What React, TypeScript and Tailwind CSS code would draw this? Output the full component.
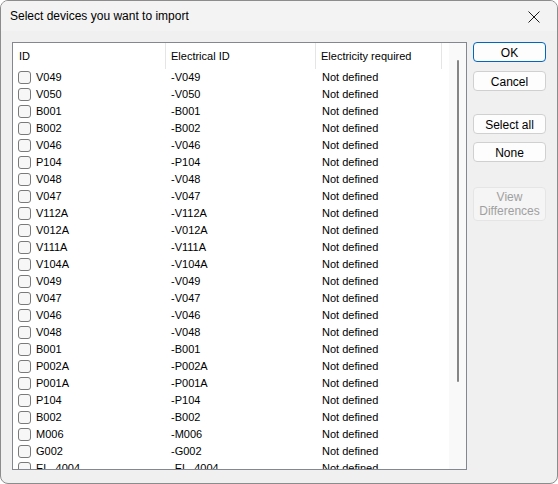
import React from "react";

const ROWS = [
  "V049", "V050", "B001", "B002", "V046", "P104", "V048", "V047",
  "V112A", "V012A", "V111A", "V104A", "V049", "V047", "V046", "V048",
  "B001", "P002A", "P001A", "P104", "B002", "M006", "G002", "EL_4004",
];

const ui = { fontFamily: '"Liberation Sans", Arial, sans-serif' };

function Btn({ children, primary, disabled, tall }: { children: React.ReactNode; primary?: boolean; disabled?: boolean; tall?: boolean }) {
  const cls = disabled
    ? "border-[#e5e5e5] bg-[#f5f5f5] text-[#a0a0a0]"
    : primary
      ? "border-[#0067c0] bg-[#fdfdfd] text-black"
      : "border-[#d0d0d0] bg-[#fdfdfd] text-black";
  return (
    <button
      className={`w-[73px] ${tall ? "h-[34px] leading-[14px]" : "h-[20px] pt-[1px]"} rounded-[4px] border text-[12px] ${cls}`}
      style={ui}
    >
      {children}
    </button>
  );
}

export default function App() {
  return (
    <div
      className="w-[558px] h-[484px] bg-[#f0f0f0] border border-[#8c8c8c] rounded-[8px] overflow-hidden flex flex-col"
      style={ui}
    >
      {/* title bar */}
      <div className="h-[30px] shrink-0 flex items-center justify-between pl-[9px] pr-[17px] bg-[#f3f3f3]">
        <span className="text-[12px] text-black">Select devices you want to import</span>
        <svg width="12" height="12" viewBox="0 0 12 12" className="mt-[1px]">
          <path d="M0.5 0.5 L11.5 11.5 M11.5 0.5 L0.5 11.5" stroke="#1a1a1a" strokeWidth="1" />
        </svg>
      </div>

      <div className="flex pt-[11px] pl-[11px] gap-[6px]">
        {/* list */}
        <div className="w-[455px] h-[428px] border border-[#828790] bg-white flex overflow-hidden">
          <div className="flex-1 flex flex-col overflow-hidden">
            <div className="h-[26px] shrink-0 flex text-[11px] text-black">
              <div className="w-[153px] pl-[6px] flex items-center border-r border-[#e5e5e5]">ID</div>
              <div className="w-[150px] pl-[5px] flex items-center border-r border-[#e5e5e5]">Electrical ID</div>
              <div className="w-[126px] pl-[5px] flex items-center border-r border-[#e5e5e5]">Electricity required</div>
            </div>
            {ROWS.map((r, i) => (
              <div key={i} className="h-[17px] shrink-0 flex items-center text-[11px] text-[#000]">
                <div className="w-[153px] pl-[5px] flex items-center gap-[5px]">
                  <span className="w-[13px] h-[13px] rounded-[3px] border border-[#7a7a7a] bg-[#f7f7f7] shrink-0" />
                  <span>{r}</span>
                </div>
                <div className="w-[150px] pl-[5px]">-{r}</div>
                <div className="w-[126px] pl-[6px]">Not defined</div>
              </div>
            ))}
          </div>
          {/* scrollbar */}
          <div className="w-[17px] h-full bg-[#f9f9f9] flex justify-center pt-[17px]">
            <div className="w-[2px] h-[322px] rounded-full bg-[#858585]" />
          </div>
        </div>

        {/* buttons */}
        <div className="flex flex-col">
          <Btn primary>OK</Btn>
          <div className="h-[9px]" />
          <Btn>Cancel</Btn>
          <div className="h-[23px]" />
          <Btn>Select all</Btn>
          <div className="h-[8px]" />
          <Btn>None</Btn>
          <div className="h-[25px]" />
          <Btn disabled tall>
            View
            <br />
            Differences
          </Btn>
        </div>
      </div>
    </div>
  );
}
